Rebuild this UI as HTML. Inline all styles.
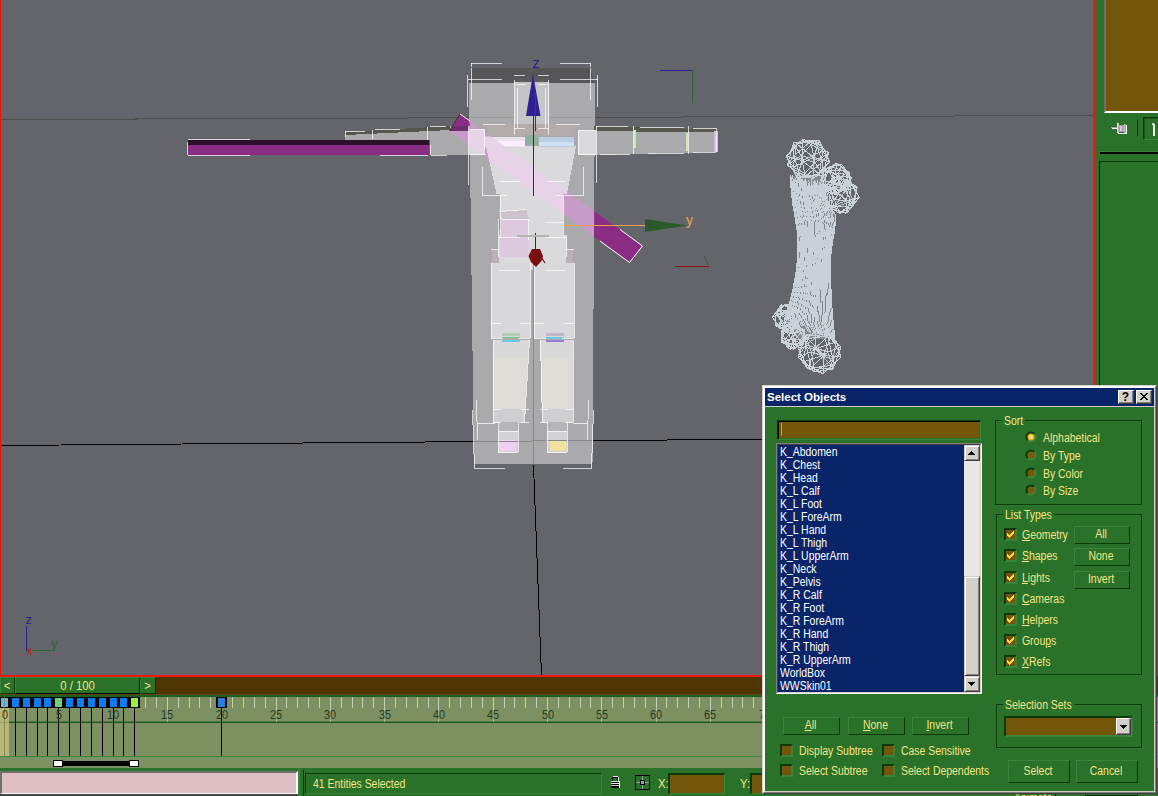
<!DOCTYPE html>
<html><head><meta charset="utf-8"><title>Select Objects</title>
<style>
*{box-sizing:border-box}
html,body{margin:0;padding:0}
body{width:1158px;height:796px;overflow:hidden;background:#2a712a;position:relative;font-family:"Liberation Sans",sans-serif;font-size:12px;color:#f4e586}
.a{position:absolute}
.t{position:absolute;white-space:nowrap;line-height:14px;height:14px;transform:scaleX(.87);transform-origin:0 0}
.tc{position:absolute;white-space:nowrap;line-height:14px;height:14px;text-align:center;transform:scaleX(.87);transform-origin:50% 0}
.btn{position:absolute;border:1px solid;border-color:#37843a #0b3a0b #0b3a0b #37843a;background:#2a712a}
.cb{position:absolute;width:13px;height:13px;background:#72560a;border:2px solid;border-color:#0b3a0b #37843a #37843a #0b3a0b}
.grp{position:absolute;border:1px solid #0b3a0b;box-shadow:1px 1px 0 #30782f, inset 1px 1px 0 #30782f}
.gl{position:absolute;background:#2a712a;padding:0 2px;white-space:nowrap;line-height:14px}
.gl span{display:inline-block;transform:scaleX(.87);transform-origin:0 0}
u{text-decoration:underline;text-underline-offset:1px}
.li i{font-style:normal;position:relative;top:-1px}
.li{position:absolute;left:5px;color:#fff;white-space:nowrap;line-height:13px;height:13px;transform:scaleX(.87);transform-origin:0 0}
.num{position:absolute;top:708px;width:30px;text-align:center;font-size:12.5px;line-height:14px;color:#273d25;transform:scaleX(.87);transform-origin:50% 0}
</style></head>
<body>
<svg class="a" style="left:0;top:0" width="1095" height="677" viewBox="0 0 1095 677" shape-rendering="crispEdges">
<rect x="0" y="0" width="1095" height="677" fill="#64656a" />
<line x1="0" y1="119.5" x2="1094" y2="115.5" stroke="#4d4d4a" stroke-width="1" />
<line x1="0" y1="445.5" x2="1094" y2="436.5" stroke="#000" stroke-width="1" />
<line x1="533.5" y1="465" x2="541.5" y2="676" stroke="#000" stroke-width="1" />
<defs>
<clipPath id="cpA"><polygon points="469,83 595,83 592.5,464 474,464" fill="#000" /><polygon points="345,132 450,126 470,126 470,155 430,155 430,140 345,140" fill="#000" /><polygon points="594,126 717,129.5 717,152 594,155" fill="#000" /></clipPath>
<clipPath id="cpB"><polygon points="486,146 576,146 567,194 563,194 563,235 566.5,235 566.5,270 498.5,270 498.5,235 500,235 500,194 496.5,194" fill="#000" /><polygon points="469,129 485,129 485,155 469,155" fill="#000" /><polygon points="577.5,130 596,130 596,155 577.5,155" fill="#000" /><polygon points="485,136.5 576,136.5 576,146.5 485,146.5" fill="#000" /></clipPath>
</defs>
<rect x="188" y="140" width="241" height="5" fill="#2a1029" />
<rect x="188" y="145" width="241" height="10" fill="#8b2d84" />
<polygon points="460,114 642.5,246 629.5,262.5 449.5,131" fill="#8b2d84" shape-rendering="auto"/>
<polygon points="469,83 595,83 592.5,464 474,464" fill="#aaa9ac" />
<polygon points="472,68 590,68 595,83 469,83" fill="#565658" />
<polygon points="345,132 450,126 470,126 470,155 430,155 430,140 345,140" fill="#aaa9ac" />
<polygon points="345,132 450,126 450,130 345,135" fill="#56564f" />
<polygon points="594,126 717,129.5 717,152 594,155" fill="#aaa9ac" />
<polygon points="594,126 717,129.5 717,132.5 594,131" fill="#57574f" />
<rect x="713.5" y="131" width="4" height="21" fill="#d8baf0" />
<line x1="469" y1="118" x2="595" y2="117" stroke="#9c9b9e" stroke-width="1" />
<polygon points="460,114 642.5,246 629.5,262.5 449.5,131" fill="#c79bc8" clip-path="url(#cpA)" shape-rendering="auto"/>
<polygon points="452,126 469,126 469,131 449.5,131" fill="#6c3070" shape-rendering="auto"/>
<polygon points="449.5,131 469,131 469,145.3" fill="#c79bc8" shape-rendering="auto"/>
<rect x="514" y="78" width="35" height="57" fill="#c5c4c7" />
<rect x="514" y="78" width="35" height="4" fill="#5a5a5a" />
<rect x="488" y="124" width="87" height="12" fill="#b3abac" />
<polygon points="486,146 576,146 567,194 563,194 563,235 566.5,235 566.5,270 498.5,270 498.5,235 500,235 500,194 496.5,194" fill="#dad9dc" />
<polygon points="469,129 485,129 485,155 469,155" fill="#dad9dc" />
<polygon points="577.5,130 596,130 596,155 577.5,155" fill="#dad9dc" />
<rect x="485" y="136.5" width="40" height="10" fill="#ebe0ec" />
<rect x="525" y="135" width="13" height="10" fill="#8fb09a" />
<rect x="539" y="136.5" width="35" height="10" fill="#b9cde5" />
<rect x="485" y="141" width="40" height="5" fill="#fbeefc" />
<rect x="539" y="142" width="35" height="4" fill="#d0e0f4" />
<polygon points="460,114 642.5,246 629.5,262.5 449.5,131" fill="#e8d2e8" clip-path="url(#cpB)" shape-rendering="auto"/>
<rect x="499.5" y="219" width="29" height="38" fill="#ddc9de" />
<polygon points="499.5,211 526,209 529,219 502,219" fill="#cbc3cc" />
<rect x="498" y="219" width="3" height="10" fill="#9a909a" />
<rect x="491" y="263" width="39" height="75" fill="#d8d7da" />
<rect x="534" y="263" width="40" height="75" fill="#d8d7da" />
<polygon points="493,340 529,340 524,423 493,423" fill="#dad9da" />
<polygon points="540,340 573,340 573,423 542,423" fill="#dad9da" />
<polygon points="494,358 527.5,358 525,408 494,408" fill="#dedcd6" />
<polygon points="541,358 572,358 572,408 542.5,408" fill="#dedcd6" />
<rect x="492" y="250" width="7" height="13" fill="#b9b1b6" />
<rect x="566" y="250" width="7" height="13" fill="#b9b1b6" />
<rect x="502" y="333" width="18" height="3" fill="#b8c8b8" />
<rect x="502" y="337" width="18" height="2" fill="#88c090" />
<rect x="502" y="340" width="18" height="2" fill="#70c8e0" />
<rect x="546" y="333" width="18" height="3" fill="#c0b8c8" />
<rect x="546" y="337" width="18" height="2" fill="#70c8e0" />
<rect x="546" y="340" width="18" height="2" fill="#9a78d8" />
<rect x="493" y="409" width="30" height="13" fill="#cfced2" />
<rect x="543" y="409" width="30" height="13" fill="#cfced2" />
<rect x="499" y="422" width="19" height="9" fill="#b5b4b8" />
<rect x="548" y="422" width="19" height="9" fill="#b5b4b8" />
<rect x="498" y="431" width="20" height="22" fill="#d2d1d4" />
<rect x="547" y="431" width="20" height="22" fill="#d2d1d4" />
<rect x="499" y="440" width="17" height="11" fill="#f0d0f0" />
<rect x="550" y="440" width="16" height="11" fill="#f2e0a0" />
<line x1="474" y1="441.5" x2="592" y2="440.5" stroke="#8a898c" stroke-width="1" />
<line x1="533" y1="257" x2="534" y2="464" stroke="#8a898c" stroke-width="1" />
<line x1="471" y1="63.5" x2="502" y2="63.5" stroke="#fff" stroke-width="1" opacity=".72"/>
<line x1="560" y1="63.5" x2="591" y2="63.5" stroke="#fff" stroke-width="1" opacity=".72"/>
<line x1="471.5" y1="63" x2="471.5" y2="67" stroke="#fff" stroke-width="1" opacity=".72"/>
<line x1="590.5" y1="63" x2="590.5" y2="67" stroke="#fff" stroke-width="1" opacity=".72"/>
<line x1="467.5" y1="79.5" x2="502" y2="79.5" stroke="#fff" stroke-width="1" opacity=".72"/>
<line x1="560" y1="79.5" x2="597.5" y2="79.5" stroke="#fff" stroke-width="1" opacity=".72"/>
<line x1="467.5" y1="75" x2="467.5" y2="107" stroke="#fff" stroke-width="1" opacity=".72"/>
<line x1="597.5" y1="75" x2="597.5" y2="107" stroke="#fff" stroke-width="1" opacity=".72"/>
<line x1="471.5" y1="68" x2="471.5" y2="100" stroke="#fff" stroke-width="1" opacity=".72"/>
<line x1="590.5" y1="68" x2="590.5" y2="100" stroke="#fff" stroke-width="1" opacity=".72"/>
<line x1="468.5" y1="126" x2="468.5" y2="185" stroke="#fff" stroke-width="1" opacity=".72"/>
<line x1="596.5" y1="126" x2="596.5" y2="183" stroke="#fff" stroke-width="1" opacity=".72"/>
<line x1="472.5" y1="410" x2="474.5" y2="468" stroke="#fff" stroke-width="1" opacity=".72"/>
<line x1="593.5" y1="410" x2="591.5" y2="468" stroke="#fff" stroke-width="1" opacity=".72"/>
<line x1="474" y1="468.5" x2="505" y2="468.5" stroke="#fff" stroke-width="1" opacity=".72"/>
<line x1="563" y1="468.5" x2="592" y2="468.5" stroke="#fff" stroke-width="1" opacity=".72"/>
<line x1="476.5" y1="400" x2="477.5" y2="440" stroke="#fff" stroke-width="1" opacity=".72"/>
<line x1="588.5" y1="400" x2="587.5" y2="440" stroke="#fff" stroke-width="1" opacity=".72"/>
<line x1="514.5" y1="80" x2="514.5" y2="135" stroke="#fff" stroke-width="1" opacity=".72"/>
<line x1="548.5" y1="80" x2="548.5" y2="135" stroke="#fff" stroke-width="1" opacity=".72"/>
<line x1="514" y1="75.5" x2="525" y2="75.5" stroke="#fff" stroke-width="1" opacity=".72"/>
<line x1="538" y1="75.5" x2="549" y2="75.5" stroke="#fff" stroke-width="1" opacity=".72"/>
<line x1="514" y1="128.5" x2="525" y2="128.5" stroke="#fff" stroke-width="1" opacity=".72"/>
<line x1="538" y1="128.5" x2="549" y2="128.5" stroke="#fff" stroke-width="1" opacity=".72"/>
<line x1="517.5" y1="88" x2="517.5" y2="128" stroke="#fff" stroke-width="1" opacity=".72"/>
<line x1="545.5" y1="88" x2="545.5" y2="128" stroke="#fff" stroke-width="1" opacity=".72"/>
<line x1="516" y1="84.5" x2="526" y2="84.5" stroke="#fff" stroke-width="1" opacity=".72"/>
<line x1="538" y1="84.5" x2="548" y2="84.5" stroke="#fff" stroke-width="1" opacity=".72"/>
<line x1="483" y1="124.5" x2="505" y2="124.5" stroke="#fff" stroke-width="1" opacity=".72"/>
<line x1="556" y1="124.5" x2="580" y2="124.5" stroke="#fff" stroke-width="1" opacity=".72"/>
<line x1="500" y1="181.5" x2="520" y2="181.5" stroke="#fff" stroke-width="1" opacity=".72"/>
<line x1="548" y1="181.5" x2="566" y2="181.5" stroke="#fff" stroke-width="1" opacity=".72"/>
<line x1="482" y1="167" x2="482" y2="195" stroke="#fff" stroke-width="1" opacity=".72"/>
<line x1="482" y1="195.5" x2="507" y2="195.5" stroke="#fff" stroke-width="1" opacity=".72"/>
<line x1="556" y1="195.5" x2="584" y2="195.5" stroke="#fff" stroke-width="1" opacity=".72"/>
<line x1="583.5" y1="167" x2="583.5" y2="195" stroke="#fff" stroke-width="1" opacity=".72"/>
<line x1="500.5" y1="195" x2="500.5" y2="237" stroke="#fff" stroke-width="1" opacity=".72"/>
<line x1="563.5" y1="195" x2="563.5" y2="237" stroke="#fff" stroke-width="1" opacity=".72"/>
<line x1="545" y1="222.5" x2="563" y2="222.5" stroke="#fff" stroke-width="1" opacity=".72"/>
<line x1="499" y1="237.5" x2="520" y2="237.5" stroke="#fff" stroke-width="1" opacity=".72"/>
<line x1="545" y1="237.5" x2="566" y2="237.5" stroke="#fff" stroke-width="1" opacity=".72"/>
<line x1="498.5" y1="219" x2="498.5" y2="257" stroke="#fff" stroke-width="1" opacity=".72"/>
<line x1="566.5" y1="237" x2="566.5" y2="257" stroke="#fff" stroke-width="1" opacity=".72"/>
<line x1="499" y1="211.5" x2="526" y2="209.5" stroke="#fff" stroke-width="1" opacity=".72"/>
<line x1="502" y1="219.5" x2="529" y2="219.5" stroke="#fff" stroke-width="1" opacity=".72"/>
<line x1="528.5" y1="219" x2="528.5" y2="240" stroke="#fff" stroke-width="1" opacity=".72"/>
<line x1="345" y1="131.5" x2="365" y2="131.5" stroke="#fff" stroke-width="1" opacity=".72"/>
<line x1="375" y1="129.5" x2="400" y2="129.5" stroke="#fff" stroke-width="1" opacity=".72"/>
<line x1="430" y1="126.5" x2="446" y2="126.5" stroke="#fff" stroke-width="1" opacity=".72"/>
<line x1="345.5" y1="131" x2="345.5" y2="137" stroke="#fff" stroke-width="1" opacity=".72"/>
<line x1="372.5" y1="130" x2="372.5" y2="139" stroke="#fff" stroke-width="1" opacity=".72"/>
<line x1="427.5" y1="127" x2="427.5" y2="140" stroke="#fff" stroke-width="1" opacity=".72"/>
<line x1="431" y1="155.5" x2="447" y2="155.5" stroke="#fff" stroke-width="1" opacity=".72"/>
<line x1="430.5" y1="145" x2="430.5" y2="155" stroke="#fff" stroke-width="1" opacity=".72"/>
<line x1="188" y1="139.5" x2="250" y2="139.5" stroke="#fff" stroke-width="1" opacity=".72"/>
<line x1="188" y1="155.5" x2="250" y2="155.5" stroke="#fff" stroke-width="1" opacity=".72"/>
<line x1="187.5" y1="142" x2="187.5" y2="155" stroke="#fff" stroke-width="1" opacity=".72"/>
<line x1="380" y1="155.5" x2="428" y2="155.5" stroke="#fff" stroke-width="1" opacity=".72"/>
<line x1="470" y1="129.5" x2="484" y2="129.5" stroke="#fff" stroke-width="1" opacity=".72"/>
<line x1="470" y1="154.5" x2="486" y2="154.5" stroke="#fff" stroke-width="1" opacity=".72"/>
<line x1="484.5" y1="130" x2="484.5" y2="150" stroke="#fff" stroke-width="1" opacity=".72"/>
<line x1="633.5" y1="126" x2="633.5" y2="154" stroke="#fff" stroke-width="1" opacity=".72"/>
<line x1="688.5" y1="126" x2="688.5" y2="154" stroke="#fff" stroke-width="1" opacity=".72"/>
<line x1="596" y1="126.5" x2="628" y2="126.5" stroke="#fff" stroke-width="1" opacity=".72"/>
<line x1="640" y1="127.5" x2="684" y2="127.5" stroke="#fff" stroke-width="1" opacity=".72"/>
<line x1="693" y1="128.5" x2="716" y2="128.5" stroke="#fff" stroke-width="1" opacity=".72"/>
<line x1="716.5" y1="128" x2="716.5" y2="152" stroke="#fff" stroke-width="1" opacity=".72"/>
<line x1="600" y1="154.5" x2="630" y2="154.5" stroke="#fff" stroke-width="1" opacity=".72"/>
<line x1="648" y1="153.5" x2="684" y2="153.5" stroke="#fff" stroke-width="1" opacity=".72"/>
<line x1="693" y1="152.5" x2="716" y2="152.5" stroke="#fff" stroke-width="1" opacity=".72"/>
<line x1="578.5" y1="131" x2="578.5" y2="154" stroke="#fff" stroke-width="1" opacity=".72"/>
<line x1="578" y1="130.5" x2="596" y2="130.5" stroke="#fff" stroke-width="1" opacity=".72"/>
<line x1="578" y1="154.5" x2="596" y2="154.5" stroke="#fff" stroke-width="1" opacity=".72"/>
<rect x="634" y="130" width="2" height="18" fill="#c8e8b8" />
<rect x="686" y="133" width="2" height="18" fill="#c8e8b8" />
<line x1="491.5" y1="263" x2="491.5" y2="338" stroke="#fff" stroke-width="1" opacity=".72"/>
<line x1="530.5" y1="263" x2="530.5" y2="338" stroke="#fff" stroke-width="1" opacity=".72"/>
<line x1="491" y1="323.5" x2="501" y2="323.5" stroke="#fff" stroke-width="1" opacity=".72"/>
<line x1="520" y1="323.5" x2="530" y2="323.5" stroke="#fff" stroke-width="1" opacity=".72"/>
<line x1="491" y1="338.5" x2="503" y2="338.5" stroke="#fff" stroke-width="1" opacity=".72"/>
<line x1="518" y1="338.5" x2="530" y2="338.5" stroke="#fff" stroke-width="1" opacity=".72"/>
<line x1="534.5" y1="263" x2="534.5" y2="338" stroke="#fff" stroke-width="1" opacity=".72"/>
<line x1="574.5" y1="263" x2="574.5" y2="338" stroke="#fff" stroke-width="1" opacity=".72"/>
<line x1="534" y1="323.5" x2="544" y2="323.5" stroke="#fff" stroke-width="1" opacity=".72"/>
<line x1="564" y1="323.5" x2="574" y2="323.5" stroke="#fff" stroke-width="1" opacity=".72"/>
<line x1="534" y1="338.5" x2="546" y2="338.5" stroke="#fff" stroke-width="1" opacity=".72"/>
<line x1="562" y1="338.5" x2="574" y2="338.5" stroke="#fff" stroke-width="1" opacity=".72"/>
<line x1="491" y1="249.5" x2="499" y2="249.5" stroke="#fff" stroke-width="1" opacity=".72"/>
<line x1="566" y1="249.5" x2="574" y2="249.5" stroke="#fff" stroke-width="1" opacity=".72"/>
<line x1="499" y1="270.5" x2="520" y2="270.5" stroke="#fff" stroke-width="1" opacity=".72"/>
<line x1="545" y1="270.5" x2="566" y2="270.5" stroke="#fff" stroke-width="1" opacity=".72"/>
<line x1="529.5" y1="340" x2="524.5" y2="422" stroke="#fff" stroke-width="1" opacity=".72"/>
<line x1="540.5" y1="340" x2="542.5" y2="422" stroke="#fff" stroke-width="1" opacity=".72"/>
<line x1="493.5" y1="340" x2="493.5" y2="422" stroke="#fff" stroke-width="1" opacity=".72"/>
<line x1="493" y1="409.5" x2="501" y2="409.5" stroke="#fff" stroke-width="1" opacity=".72"/>
<line x1="521" y1="409.5" x2="529" y2="409.5" stroke="#fff" stroke-width="1" opacity=".72"/>
<line x1="493" y1="422.5" x2="501" y2="422.5" stroke="#fff" stroke-width="1" opacity=".72"/>
<line x1="521" y1="422.5" x2="529" y2="422.5" stroke="#fff" stroke-width="1" opacity=".72"/>
<line x1="573.5" y1="340" x2="573.5" y2="422" stroke="#fff" stroke-width="1" opacity=".72"/>
<line x1="540" y1="409.5" x2="548" y2="409.5" stroke="#fff" stroke-width="1" opacity=".72"/>
<line x1="565" y1="409.5" x2="573" y2="409.5" stroke="#fff" stroke-width="1" opacity=".72"/>
<line x1="540" y1="422.5" x2="548" y2="422.5" stroke="#fff" stroke-width="1" opacity=".72"/>
<line x1="565" y1="422.5" x2="573" y2="422.5" stroke="#fff" stroke-width="1" opacity=".72"/>
<line x1="498.5" y1="423" x2="498.5" y2="452" stroke="#fff" stroke-width="1" opacity=".72"/>
<line x1="518.5" y1="423" x2="518.5" y2="452" stroke="#fff" stroke-width="1" opacity=".72"/>
<line x1="498" y1="431.5" x2="518" y2="431.5" stroke="#fff" stroke-width="1" opacity=".72"/>
<line x1="498" y1="452.5" x2="518" y2="452.5" stroke="#fff" stroke-width="1" opacity=".72"/>
<line x1="547.5" y1="423" x2="547.5" y2="452" stroke="#fff" stroke-width="1" opacity=".72"/>
<line x1="567.5" y1="423" x2="567.5" y2="452" stroke="#fff" stroke-width="1" opacity=".72"/>
<line x1="547" y1="431.5" x2="567" y2="431.5" stroke="#fff" stroke-width="1" opacity=".72"/>
<line x1="547" y1="452.5" x2="567" y2="452.5" stroke="#fff" stroke-width="1" opacity=".72"/>
<line x1="478" y1="423.5" x2="495" y2="423.5" stroke="#fff" stroke-width="1" opacity=".72"/>
<line x1="573" y1="423.5" x2="588" y2="423.5" stroke="#fff" stroke-width="1" opacity=".72"/>
<g shape-rendering="auto">
<line x1="629.5" y1="262.5" x2="642.5" y2="246" stroke="#fff" stroke-width="1" />
<line x1="600" y1="241" x2="629.5" y2="262.5" stroke="#fff" stroke-width="1" />
<line x1="620" y1="229.5" x2="642.5" y2="246" stroke="#fff" stroke-width="1" />
<line x1="449.5" y1="131" x2="460" y2="114" stroke="#3a3a38" stroke-width="1" />
<line x1="460" y1="114" x2="470" y2="121" stroke="#fff" stroke-width="1" />
</g>
<polygon points="533,74 526,116 540.5,116" fill="#2e2090" shape-rendering="auto"/>
<line x1="533.5" y1="116" x2="533.5" y2="196" stroke="#2e2090" stroke-width="1" />
<line x1="535.5" y1="93" x2="535.5" y2="131" stroke="#9c1a1a" stroke-width="1" />
<line x1="535" y1="233" x2="535" y2="250" stroke="#7a1010" stroke-width="1" />
<polygon points="528.5,256 532,249 540,249 543,256 541.5,261 536,267 531,262" fill="#7a1010" shape-rendering="auto"/>
<line x1="541" y1="257" x2="545" y2="263" stroke="#7a1010" stroke-width="1.3" shape-rendering="auto"/>
<rect x="516.5" y="235" width="32" height="2" fill="#b4b3ae" />
<line x1="564" y1="225.5" x2="646" y2="225.5" stroke="#f0a050" stroke-width="1" />
<polygon points="645,219 645,232 687,225.5" fill="#2a5a2a" shape-rendering="auto"/>
<line x1="660" y1="70.5" x2="693" y2="70.5" stroke="#2e2090" stroke-width="1" />
<line x1="692.5" y1="70" x2="692.5" y2="103" stroke="#2a6a3a" stroke-width="1" />
<line x1="675" y1="266.5" x2="709" y2="266.5" stroke="#8a1818" stroke-width="1" />
<line x1="704" y1="256" x2="708" y2="265" stroke="#2a6a2a" stroke-width="1" shape-rendering="auto"/>
<line x1="26.5" y1="626" x2="26.5" y2="651" stroke="#2e2090" stroke-width="1" />
<line x1="27" y1="650.5" x2="55" y2="650.5" stroke="#2a6a3a" stroke-width="1" />
<g shape-rendering="auto" font-family="Liberation Sans, sans-serif" font-size="13">
<text x="532.5" y="68" fill="#2e2090" font-size="14">z</text>
<text x="686" y="224.5" fill="#f0a050" font-size="14">y</text>
<text x="25.5" y="624" fill="#2e2090" font-size="13">z</text>
<text x="51" y="648" fill="#2a6a3a" font-size="13">y</text>
<text x="26.5" y="655" fill="#c02020" font-size="12">x</text>
</g>
<g shape-rendering="crispEdges" stroke="#c9d0d8" stroke-width="1" fill="none">
<path d="M790 176 L792 200 L797 228 L798 255 L795 280 L790 302 L783 322 L800 340 L835 338 L832 310 L831 290 L830 262 L832 245 L835 228 L836 216 L827 200 L826 176Z" fill="#c9d0d8" stroke="none" opacity=".32"/>
<path d="M796.7 177.5L819.3 174.1M796.7 177.5L802.3 160.6M796.7 177.5L813.7 178.1M796.7 177.5L793.2 167.1M796.7 177.5L786.2 156.3M819.3 174.1L802.3 160.6M819.3 174.1L813.7 178.1M819.3 174.1L829.8 161.7M819.3 174.1L822.8 150.9M796.7 143.9L819.3 140.5M796.7 143.9L802.3 139.9M796.7 143.9L813.7 157.4M796.7 143.9L793.2 167.1M796.7 143.9L786.2 156.3M819.3 140.5L802.3 139.9M819.3 140.5L813.7 157.4M819.3 140.5L829.8 161.7M819.3 140.5L822.8 150.9M802.3 139.9L802.3 160.6M802.3 139.9L822.8 150.9M802.3 139.9L786.2 156.3M802.3 160.6L822.8 150.9M802.3 160.6L786.2 156.3M813.7 157.4L813.7 178.1M813.7 157.4L829.8 161.7M813.7 157.4L793.2 167.1M813.7 178.1L829.8 161.7M813.7 178.1L793.2 167.1M829.8 161.7L822.8 150.9M793.2 167.1L786.2 156.3M800.9 177.1L815.1 162.5M800.9 177.1L793.5 156.3M800.9 177.1L822.5 175.1M800.9 177.1L805.4 176.6M800.9 177.1L787.5 165.0M815.1 162.5L793.5 156.3M815.1 162.5L822.5 175.1M815.1 162.5L828.5 153.0M815.1 162.5L810.6 141.4M800.9 155.5L815.1 140.9M800.9 155.5L793.5 142.9M800.9 155.5L822.5 161.7M800.9 155.5L805.4 176.6M800.9 155.5L787.5 165.0M815.1 140.9L793.5 142.9M815.1 140.9L822.5 161.7M815.1 140.9L828.5 153.0M815.1 140.9L810.6 141.4M793.5 142.9L793.5 156.3M793.5 142.9L810.6 141.4M793.5 142.9L787.5 165.0M793.5 156.3L810.6 141.4M793.5 156.3L787.5 165.0M822.5 161.7L822.5 175.1M822.5 161.7L828.5 153.0M822.5 161.7L805.4 176.6M822.5 175.1L828.5 153.0M822.5 175.1L805.4 176.6M828.5 153.0L810.6 141.4M805.4 176.6L787.5 165.0M830.6 194.1L841.4 191.4M830.6 194.1L825.0 185.8M830.6 194.1L847.0 189.2M830.6 194.1L834.1 182.3M830.6 194.1L820.5 180.1M841.4 191.4L825.0 185.8M841.4 191.4L847.0 189.2M841.4 191.4L851.5 177.9M841.4 191.4L837.9 175.7M830.6 166.6L841.4 163.9M830.6 166.6L825.0 168.8M830.6 166.6L847.0 172.2M830.6 166.6L834.1 182.3M830.6 166.6L820.5 180.1M841.4 163.9L825.0 168.8M841.4 163.9L847.0 172.2M841.4 163.9L851.5 177.9M841.4 163.9L837.9 175.7M825.0 168.8L825.0 185.8M825.0 168.8L837.9 175.7M825.0 168.8L820.5 180.1M825.0 185.8L837.9 175.7M825.0 185.8L820.5 180.1M847.0 172.2L847.0 189.2M847.0 172.2L851.5 177.9M847.0 172.2L834.1 182.3M847.0 189.2L851.5 177.9M847.0 189.2L834.1 182.3M851.5 177.9L837.9 175.7M834.1 182.3L820.5 180.1M835.4 194.9L836.6 184.8M835.4 194.9L822.4 185.1M835.4 194.9L849.6 186.3M835.4 194.9L843.4 187.6M835.4 194.9L826.6 186.9M836.6 184.8L822.4 185.1M836.6 184.8L849.6 186.3M836.6 184.8L845.4 171.1M836.6 184.8L828.6 170.4M835.4 173.2L836.6 163.1M835.4 173.2L822.4 171.7M835.4 173.2L849.6 172.9M835.4 173.2L843.4 187.6M835.4 173.2L826.6 186.9M836.6 163.1L822.4 171.7M836.6 163.1L849.6 172.9M836.6 163.1L845.4 171.1M836.6 163.1L828.6 170.4M822.4 171.7L822.4 185.1M822.4 171.7L828.6 170.4M822.4 171.7L826.6 186.9M822.4 185.1L828.6 170.4M822.4 185.1L826.6 186.9M849.6 172.9L849.6 186.3M849.6 172.9L845.4 171.1M849.6 172.9L843.4 187.6M849.6 186.3L845.4 171.1M849.6 186.3L843.4 187.6M845.4 171.1L828.6 170.4M843.4 187.6L826.6 186.9M830.6 208.4L849.4 202.2M830.6 208.4L833.5 189.4M830.6 208.4L846.5 213.3M830.6 208.4L828.7 207.5M830.6 208.4L820.7 192.7M849.4 202.2L833.5 189.4M849.4 202.2L846.5 213.3M849.4 202.2L859.3 197.3M849.4 202.2L851.3 182.5M830.6 187.8L849.4 181.6M830.6 187.8L833.5 176.7M830.6 187.8L846.5 200.6M830.6 187.8L828.7 207.5M830.6 187.8L820.7 192.7M849.4 181.6L833.5 176.7M849.4 181.6L846.5 200.6M849.4 181.6L859.3 197.3M849.4 181.6L851.3 182.5M833.5 176.7L833.5 189.4M833.5 176.7L851.3 182.5M833.5 176.7L820.7 192.7M833.5 189.4L851.3 182.5M833.5 189.4L820.7 192.7M846.5 200.6L846.5 213.3M846.5 200.6L859.3 197.3M846.5 200.6L828.7 207.5M846.5 213.3L859.3 197.3M846.5 213.3L828.7 207.5M859.3 197.3L851.3 182.5M828.7 207.5L820.7 192.7M834.6 206.7L845.4 190.4M834.6 206.7L826.5 188.7M834.6 206.7L853.5 205.7M834.6 206.7L839.7 213.5M834.6 206.7L822.9 203.0M845.4 190.4L826.5 188.7M845.4 190.4L853.5 205.7M845.4 190.4L857.1 187.0M845.4 190.4L840.3 176.5M834.6 199.6L845.4 183.3M834.6 199.6L826.5 184.3M834.6 199.6L853.5 201.3M834.6 199.6L839.7 213.5M834.6 199.6L822.9 203.0M845.4 183.3L826.5 184.3M845.4 183.3L853.5 201.3M845.4 183.3L857.1 187.0M845.4 183.3L840.3 176.5M826.5 184.3L826.5 188.7M826.5 184.3L840.3 176.5M826.5 184.3L822.9 203.0M826.5 188.7L840.3 176.5M826.5 188.7L822.9 203.0M853.5 201.3L853.5 205.7M853.5 201.3L857.1 187.0M853.5 201.3L839.7 213.5M853.5 205.7L857.1 187.0M853.5 205.7L839.7 213.5M857.1 187.0L840.3 176.5M839.7 213.5L822.9 203.0M780.3 327.7L793.7 321.6M780.3 327.7L781.1 313.0M780.3 327.7L792.9 331.2M780.3 327.7L779.8 328.6M780.3 327.7L772.5 317.3M793.7 321.6L781.1 313.0M793.7 321.6L792.9 331.2M793.7 321.6L801.5 318.7M793.7 321.6L794.2 307.4M780.3 314.4L793.7 308.3M780.3 314.4L781.1 304.8M780.3 314.4L792.9 323.0M780.3 314.4L779.8 328.6M780.3 314.4L772.5 317.3M793.7 308.3L781.1 304.8M793.7 308.3L792.9 323.0M793.7 308.3L801.5 318.7M793.7 308.3L794.2 307.4M781.1 304.8L781.1 313.0M781.1 304.8L794.2 307.4M781.1 304.8L772.5 317.3M781.1 313.0L794.2 307.4M781.1 313.0L772.5 317.3M792.9 323.0L792.9 331.2M792.9 323.0L801.5 318.7M792.9 323.0L779.8 328.6M792.9 331.2L801.5 318.7M792.9 331.2L779.8 328.6M801.5 318.7L794.2 307.4M779.8 328.6L772.5 317.3M783.6 326.0L790.4 312.9M783.6 326.0L776.3 313.5M783.6 326.0L797.7 324.3M783.6 326.0L788.2 331.9M783.6 326.0L775.0 325.3M790.4 312.9L776.3 313.5M790.4 312.9L797.7 324.3M790.4 312.9L799.0 310.7M790.4 312.9L785.8 304.1M783.6 323.1L790.4 310.0M783.6 323.1L776.3 311.7M783.6 323.1L797.7 322.5M783.6 323.1L788.2 331.9M783.6 323.1L775.0 325.3M790.4 310.0L776.3 311.7M790.4 310.0L797.7 322.5M790.4 310.0L799.0 310.7M790.4 310.0L785.8 304.1M776.3 311.7L776.3 313.5M776.3 311.7L785.8 304.1M776.3 311.7L775.0 325.3M776.3 313.5L785.8 304.1M776.3 313.5L775.0 325.3M797.7 322.5L797.7 324.3M797.7 322.5L799.0 310.7M797.7 322.5L788.2 331.9M797.7 324.3L799.0 310.7M797.7 324.3L788.2 331.9M799.0 310.7L785.8 304.1M788.2 331.9L775.0 325.3M789.7 349.3L796.3 345.4M789.7 349.3L782.4 341.4M789.7 349.3L803.6 344.6M789.7 349.3L794.2 340.1M789.7 349.3L781.0 338.1M796.3 345.4L782.4 341.4M796.3 345.4L803.6 344.6M796.3 345.4L805.0 333.9M796.3 345.4L791.8 331.9M789.7 326.6L796.3 322.7M789.7 326.6L782.4 327.4M789.7 326.6L803.6 330.6M789.7 326.6L794.2 340.1M789.7 326.6L781.0 338.1M796.3 322.7L782.4 327.4M796.3 322.7L803.6 330.6M796.3 322.7L805.0 333.9M796.3 322.7L791.8 331.9M782.4 327.4L782.4 341.4M782.4 327.4L791.8 331.9M782.4 327.4L781.0 338.1M782.4 341.4L791.8 331.9M782.4 341.4L781.0 338.1M803.6 330.6L803.6 344.6M803.6 330.6L805.0 333.9M803.6 330.6L794.2 340.1M803.6 344.6L805.0 333.9M803.6 344.6L794.2 340.1M805.0 333.9L791.8 331.9M794.2 340.1L781.0 338.1M793.9 349.3L792.1 339.6M793.9 349.3L781.5 342.2M793.9 349.3L804.5 340.2M793.9 349.3L801.6 343.2M793.9 349.3L787.4 344.4M792.1 339.6L781.5 342.2M792.1 339.6L804.5 340.2M792.1 339.6L798.6 327.6M792.1 339.6L784.4 328.8M793.9 332.4L792.1 322.7M793.9 332.4L781.5 331.8M793.9 332.4L804.5 329.8M793.9 332.4L801.6 343.2M793.9 332.4L787.4 344.4M792.1 322.7L781.5 331.8M792.1 322.7L804.5 329.8M792.1 322.7L798.6 327.6M792.1 322.7L784.4 328.8M781.5 331.8L781.5 342.2M781.5 331.8L784.4 328.8M781.5 331.8L787.4 344.4M781.5 342.2L784.4 328.8M781.5 342.2L787.4 344.4M804.5 329.8L804.5 340.2M804.5 329.8L798.6 327.6M804.5 329.8L801.6 343.2M804.5 340.2L798.6 327.6M804.5 340.2L801.6 343.2M798.6 327.6L784.4 328.8M801.6 343.2L787.4 344.4M807.6 368.5L831.4 365.4M807.6 368.5L815.6 348.9M807.6 368.5L823.4 373.6M807.6 368.5L802.7 362.1M807.6 368.5L797.9 346.9M831.4 365.4L815.6 348.9M831.4 365.4L823.4 373.6M831.4 365.4L841.1 357.1M831.4 365.4L836.3 341.9M807.6 338.6L831.4 335.5M807.6 338.6L815.6 330.4M807.6 338.6L823.4 355.1M807.6 338.6L802.7 362.1M807.6 338.6L797.9 346.9M831.4 335.5L815.6 330.4M831.4 335.5L823.4 355.1M831.4 335.5L841.1 357.1M831.4 335.5L836.3 341.9M815.6 330.4L815.6 348.9M815.6 330.4L836.3 341.9M815.6 330.4L797.9 346.9M815.6 348.9L836.3 341.9M815.6 348.9L797.9 346.9M823.4 355.1L823.4 373.6M823.4 355.1L841.1 357.1M823.4 355.1L802.7 362.1M823.4 373.6L841.1 357.1M823.4 373.6L802.7 362.1M841.1 357.1L836.3 341.9M802.7 362.1L797.9 346.9M811.3 367.4L827.7 352.1M811.3 367.4L805.9 344.7M811.3 367.4L833.1 368.9M811.3 367.4L814.7 371.9M811.3 367.4L797.9 357.0M827.7 352.1L805.9 344.7M827.7 352.1L833.1 368.9M827.7 352.1L841.1 347.0M827.7 352.1L824.3 332.1M811.3 351.9L827.7 336.6M811.3 351.9L805.9 335.1M811.3 351.9L833.1 359.3M811.3 351.9L814.7 371.9M811.3 351.9L797.9 357.0M827.7 336.6L805.9 335.1M827.7 336.6L833.1 359.3M827.7 336.6L841.1 347.0M827.7 336.6L824.3 332.1M805.9 335.1L805.9 344.7M805.9 335.1L824.3 332.1M805.9 335.1L797.9 357.0M805.9 344.7L824.3 332.1M805.9 344.7L797.9 357.0M833.1 359.3L833.1 368.9M833.1 359.3L841.1 347.0M833.1 359.3L814.7 371.9M833.1 368.9L841.1 347.0M833.1 368.9L814.7 371.9M841.1 347.0L824.3 332.1M814.7 371.9L797.9 357.0M790.0 174.9L791.1 188.9L792.5 202.9L795.0 216.9L797.1 230.9L797.6 244.9L797.5 258.9L795.9 272.9L793.4 286.9L790.2 300.9L785.5 314.9L784.1 323.2M790.8 177.4L792.0 191.4L793.7 205.4L796.2 219.4L797.9 233.4L798.4 247.4L797.9 261.4L796.2 275.4L793.6 289.4L790.3 303.4L785.5 317.4L784.2 321.3M791.7 177.4L792.9 191.4L794.6 205.4L797.3 219.4L798.8 233.4L799.2 247.4L798.7 261.4L797.1 275.4L794.6 289.4L791.4 303.4L786.8 317.4L786.2 319.1M792.7 175.0L793.8 189.0L795.3 203.0L798.1 217.0L799.9 231.0L800.2 245.0L800.0 259.0L798.5 273.0L796.2 287.0L793.4 301.0L789.0 315.0L787.4 320.1M793.9 179.8L795.1 193.8L797.2 207.8L799.9 221.8L801.0 235.8L801.2 249.8L800.3 263.8L798.8 277.8L796.3 291.8L793.1 305.8L788.8 319.8L788.5 320.8M794.7 178.8L795.8 192.8L797.9 206.8L800.7 220.8L801.8 234.8L802.0 248.8L801.2 262.8L799.7 276.8L797.3 290.8L794.3 304.8L790.2 318.8L794.1 327.8M795.7 177.6L796.8 191.6L798.8 205.6L801.7 219.6L802.9 233.6L803.0 247.6L802.3 261.6L800.9 275.6L798.7 289.6L796.0 303.6L792.0 317.6L796.2 328.6M796.6 180.5L797.6 194.5L800.1 208.5L802.8 222.5L803.6 236.5L803.6 250.5L802.6 264.5L801.3 278.5L798.9 292.5L795.9 306.5L792.1 320.5L792.8 323.4M797.2 176.3L798.3 190.3L800.1 204.3L803.4 218.3L804.6 232.3L804.5 246.3L803.9 260.3L802.6 274.3L800.7 288.3L798.2 302.3L794.5 316.3L794.6 324.1M798.6 177.0L799.6 191.0L801.6 205.0L804.9 219.0L805.9 233.0L805.7 247.0L805.0 261.0L803.8 275.0L801.9 289.0L799.6 303.0L796.1 317.0L798.5 326.9M799.5 178.3L800.5 192.3L802.8 206.3L806.0 220.3L806.7 234.3L806.5 248.3L805.6 262.3L804.5 276.3L802.6 290.3L800.2 304.3L796.9 318.3L799.7 327.0M800.0 176.6L801.0 190.6L802.9 204.6L806.5 218.6L807.4 232.6L807.1 246.6L806.4 260.6L805.2 274.6L803.5 288.6L801.3 302.6L798.1 316.6L798.7 324.6M801.4 179.0L802.4 193.0L805.0 207.0L808.1 221.0L808.6 235.0L808.3 249.0L807.3 263.0L806.3 277.0L804.5 291.0L802.2 305.0L799.2 319.0L801.4 326.1M802.3 179.4L803.3 193.4L806.0 207.4L809.1 221.4L809.5 235.4L809.1 249.4L808.1 263.4L807.1 277.4L805.3 291.4L803.2 305.4L800.3 319.4L802.8 326.4M803.4 181.1L804.4 195.1L807.6 209.1L810.4 223.1L810.4 237.1L810.0 251.1L808.9 265.1L808.0 279.1L806.2 293.1L804.1 307.1L801.4 321.1L804.2 326.5M804.2 180.2L805.1 194.2L808.2 208.2L811.2 222.2L811.3 236.2L810.8 250.2L809.7 264.2L808.9 278.2L807.2 292.2L805.2 306.2L802.7 320.2L808.6 331.9M805.1 179.0L806.0 193.0L808.9 207.0L812.2 221.0L812.4 235.0L811.7 249.0L810.7 263.0L809.9 277.0L808.4 291.0L806.7 305.0L804.3 319.0L810.4 333.0L810.6 333.3M805.7 179.9L806.7 193.9L809.8 207.9L812.9 221.9L812.9 235.9L812.3 249.9L811.2 263.9L810.4 277.9L809.0 291.9L807.2 305.9L804.9 319.9L810.3 331.8M806.7 180.6L807.6 194.6L811.0 208.6L814.0 222.6L813.8 236.6L813.1 250.6L812.0 264.6L811.3 278.6L809.9 292.6L808.2 306.6L806.1 320.6L808.5 326.5M808.0 182.5L808.9 196.5L813.0 210.5L815.4 224.5L814.9 238.5L814.2 252.5L813.0 266.5L812.4 280.5L811.1 294.5L809.4 308.5L807.9 322.5L812.7 331.4M808.9 180.0L809.8 194.0L813.2 208.0L816.5 222.0L816.1 236.0L815.2 250.0L814.1 264.0L813.6 278.0L812.4 292.0L811.0 306.0L809.3 320.0L814.6 332.9M809.8 181.8L810.6 195.8L814.7 209.8L817.4 223.8L816.8 237.8L815.9 251.8L814.8 265.8L814.3 279.8L813.1 293.8L811.7 307.8L810.2 321.8L814.8 331.4M811.0 184.2L811.8 198.2L816.8 212.2L818.6 226.2L817.6 240.2L816.7 254.2L815.7 268.2L815.1 282.2L814.1 296.2L812.7 310.2L812.7 324.2L816.3 332.0M811.5 179.1L812.3 193.1L815.6 207.1L819.3 221.1L818.9 235.1L817.8 249.1L816.6 263.1L816.2 277.1L815.3 291.1L814.3 305.1L813.0 319.1L817.8 333.1L818.3 334.3M812.7 184.9L813.6 198.9L819.0 212.9L820.5 226.9L819.2 240.9L818.3 254.9L817.3 268.9L816.8 282.9L816.0 296.9L814.8 310.9L815.3 324.9L819.9 335.7M813.3 181.4L814.1 195.4L818.3 209.4L821.2 223.4L820.3 237.4L819.2 251.4L818.0 265.4L817.7 279.4L817.0 293.4L816.0 307.4L815.1 321.4L820.3 334.8M814.1 182.0L814.9 196.0L819.4 210.0L822.0 224.0L821.0 238.0L819.8 252.0L818.7 266.0L818.5 280.0L817.8 294.0L816.9 308.0L816.2 322.0L819.8 331.2M814.9 179.8L815.7 193.8L819.5 207.8L823.1 221.8L822.2 235.8L820.9 249.8L819.7 263.8L819.5 277.8L818.9 291.8L818.3 305.8L817.6 319.8L821.9 333.8L822.9 336.5M815.9 181.2L816.7 195.2L821.1 209.2L824.1 223.2L823.0 237.2L821.7 251.2L820.5 265.2L820.4 279.2L819.9 293.2L819.3 307.2L818.8 321.2L823.0 333.9M817.2 180.5L817.9 194.5L822.2 208.5L825.6 222.5L824.4 236.5L823.0 250.5L821.8 264.5L821.7 278.5L821.4 292.5L820.9 306.5L820.7 320.5L824.6 334.5L824.8 335.1M818.2 185.5L818.9 199.5L825.3 213.5L826.3 227.5L824.5 241.5L823.2 255.5L822.4 269.5L822.4 283.5L822.1 297.5L821.7 311.5L822.8 325.5L826.6 338.4M819.1 182.1L819.8 196.1L824.9 210.1L827.5 224.1L826.1 238.1L824.5 252.1L823.5 266.1L823.5 280.1L823.3 294.1L823.1 308.1L823.3 322.1L827.0 335.7M819.9 185.9L820.6 199.9L827.5 213.9L828.1 227.9L826.2 241.9L824.8 255.9L824.1 269.9L824.1 283.9L824.0 297.9L823.9 311.9L825.1 325.9L828.6 339.9L828.6 340.4M820.5 181.8L821.2 195.8L826.3 209.8L829.1 223.8L827.6 237.8L825.9 251.8L824.8 265.8L825.0 279.8L824.9 293.8L824.9 307.8L825.3 321.8L828.4 335.0M821.6 183.9L822.3 197.9L828.4 211.9L830.1 225.9L828.2 239.9L826.6 253.9L825.7 267.9L825.9 281.9L826.0 295.9L826.1 309.9L827.0 323.9L830.1 337.9L830.2 338.3M822.4 181.2L823.1 195.2L828.1 209.2L831.2 223.2L829.6 237.2L827.7 251.2L826.6 265.2L826.8 279.2L827.0 293.2L827.2 307.2L827.9 321.2L830.5 335.2L831.0 337.4M823.6 184.8L824.2 198.8L831.0 212.8L832.1 226.8L830.0 240.8L828.3 254.8L827.6 268.8L827.9 282.8L828.2 296.8L828.5 310.8L829.8 324.8L832.1 338.8L832.2 342.2M824.6 184.7L825.3 198.7L832.2 212.7L833.3 226.7L831.1 240.7L829.3 254.7L828.6 268.7L829.0 282.7L829.4 296.7L829.9 310.7L831.3 324.7L833.2 338.7L833.3 340.1M825.4 182.1L826.0 196.1L831.8 210.1L834.4 224.1L832.4 238.1L830.4 252.1L829.4 266.1L829.8 280.1L830.3 294.1L830.9 308.1L832.2 322.1L833.9 336.1L834.2 342.8M826.5 187.2L827.7 201.2L835.6 215.2L834.8 229.2L832.3 243.2L830.6 257.2L830.3 271.2L830.8 285.2L831.5 299.2L832.3 313.2L833.8 327.2L835.0 341.2L835.0 342.4"/>
</g>
</svg>
<div class="a" style="left:0;top:0;width:1px;height:677px;background:#e01808"></div>
<div class="a" style="left:1093px;top:0;width:2px;height:677px;background:#f01808"></div>
<div class="a" style="left:0;top:675px;width:1095px;height:2px;background:#f01808"></div>
<div class="a" style="left:1104px;top:0;width:54px;height:113px;background:#72560a;border-left:2px solid #707070;border-bottom:2px solid #fff"></div>
<svg class="a" style="left:1111px;top:123px" width="17" height="12" viewBox="0 0 17 12" shape-rendering="crispEdges">
<rect x="0" y="4" width="6" height="1" fill="#a8a2a8"/><rect x="1" y="5" width="6" height="1" fill="#fff"/>
<rect x="7" y="10" width="9" height="1" fill="#fff"/><rect x="15" y="2" width="1" height="9" fill="#fff"/>
<rect x="6" y="0" width="2" height="10" fill="#d4d0d4"/><rect x="6" y="0" width="1" height="3" fill="#fff"/><rect x="7" y="1" width="1" height="8" fill="#b8b2b8"/>
<rect x="8" y="2" width="5" height="7" fill="#a8a0a8"/><rect x="9" y="3" width="2" height="5" fill="#d0ccd0"/>
<rect x="13" y="1" width="2" height="9" fill="#a098a0"/><rect x="13" y="1" width="1" height="8" fill="#c8c4c8"/></svg>
<div class="a" style="left:1137px;top:120px;width:1px;height:16px;background:#0b3a0b"></div>
<div class="a" style="left:1143px;top:117px;width:20px;height:23px;border:1px solid #0b3a0b;border-right:0;border-bottom:1px solid #37843a;box-shadow:inset 1px 1px 0 #1c581c"></div>
<div class="a" style="left:1153px;top:124px;width:2px;height:12px;background:#f0ecf0"></div><div class="a" style="left:1152px;top:123px;width:2px;height:2px;background:#e0dce0"></div>
<div class="a" style="left:1099px;top:151px;width:60px;height:1px;background:#37843a"></div>
<div class="a" style="left:1100px;top:152px;width:60px;height:2px;background:#000"></div>
<div class="a" style="left:1099px;top:161px;width:60px;height:640px;border:1px solid #0b3a0b;border-left-color:#000"></div>
<div class="a" style="left:0;top:677px;width:1158px;height:18px;background:#4f3503"></div>
<div class="btn" style="left:0;top:677px;width:15px;height:17px"></div><div class="tc" style="left:0;top:679px;width:14px;font-size:13px">&lt;</div>
<div class="btn" style="left:15px;top:677px;width:125px;height:17px;border-bottom:1px solid #000;border-right:1px solid #000"></div><div class="tc" style="left:15px;top:679px;width:125px;font-size:13px">0 / 100</div>
<div class="btn" style="left:140px;top:677px;width:16px;height:17px"></div><div class="tc" style="left:140px;top:679px;width:15px;font-size:13px">&gt;</div>
<div class="a" style="left:0;top:694px;width:1158px;height:1px;background:#5e4610"></div>
<div class="a" style="left:0;top:695px;width:1158px;height:73px;background:#7c9062"></div>
<div class="a" style="left:0;top:695px;width:1158px;height:2px;background:#1e5e1e"></div>
<div class="a" style="left:0;top:721px;width:1158px;height:1px;background:#4c8046"></div><div class="a" style="left:0;top:722px;width:1158px;height:1px;background:#1a521a"></div>
<div class="a" style="left:0;top:756px;width:1158px;height:1px;background:#3c8a3c"></div>
<div class="a" style="left:0;top:768px;width:1158px;height:28px;background:#2a712a"></div>
<svg class="a" style="left:0;top:697px" width="1158" height="62" shape-rendering="crispEdges"><rect x="145" y="0" width="1" height="11" fill="#c6cdb8"/><rect x="156" y="0" width="1" height="11" fill="#c6cdb8"/><rect x="167" y="0" width="1" height="13" fill="#c6cdb8"/><rect x="167" y="13" width="1" height="12" fill="#a3b08a"/><rect x="178" y="0" width="1" height="11" fill="#c6cdb8"/><rect x="189" y="0" width="1" height="11" fill="#c6cdb8"/><rect x="199" y="0" width="1" height="11" fill="#c6cdb8"/><rect x="210" y="0" width="1" height="11" fill="#c6cdb8"/><rect x="221" y="0" width="1" height="13" fill="#c6cdb8"/><rect x="221" y="13" width="1" height="12" fill="#a3b08a"/><rect x="232" y="0" width="1" height="11" fill="#c6cdb8"/><rect x="243" y="0" width="1" height="11" fill="#c6cdb8"/><rect x="254" y="0" width="1" height="11" fill="#c6cdb8"/><rect x="265" y="0" width="1" height="11" fill="#c6cdb8"/><rect x="276" y="0" width="1" height="13" fill="#c6cdb8"/><rect x="276" y="13" width="1" height="12" fill="#a3b08a"/><rect x="286" y="0" width="1" height="11" fill="#c6cdb8"/><rect x="297" y="0" width="1" height="11" fill="#c6cdb8"/><rect x="308" y="0" width="1" height="11" fill="#c6cdb8"/><rect x="319" y="0" width="1" height="11" fill="#c6cdb8"/><rect x="330" y="0" width="1" height="13" fill="#c6cdb8"/><rect x="330" y="13" width="1" height="12" fill="#a3b08a"/><rect x="341" y="0" width="1" height="11" fill="#c6cdb8"/><rect x="352" y="0" width="1" height="11" fill="#c6cdb8"/><rect x="362" y="0" width="1" height="11" fill="#c6cdb8"/><rect x="373" y="0" width="1" height="11" fill="#c6cdb8"/><rect x="384" y="0" width="1" height="13" fill="#c6cdb8"/><rect x="384" y="13" width="1" height="12" fill="#a3b08a"/><rect x="395" y="0" width="1" height="11" fill="#c6cdb8"/><rect x="406" y="0" width="1" height="11" fill="#c6cdb8"/><rect x="417" y="0" width="1" height="11" fill="#c6cdb8"/><rect x="428" y="0" width="1" height="11" fill="#c6cdb8"/><rect x="438" y="0" width="1" height="13" fill="#c6cdb8"/><rect x="438" y="13" width="1" height="12" fill="#a3b08a"/><rect x="449" y="0" width="1" height="11" fill="#c6cdb8"/><rect x="460" y="0" width="1" height="11" fill="#c6cdb8"/><rect x="471" y="0" width="1" height="11" fill="#c6cdb8"/><rect x="482" y="0" width="1" height="11" fill="#c6cdb8"/><rect x="493" y="0" width="1" height="13" fill="#c6cdb8"/><rect x="493" y="13" width="1" height="12" fill="#a3b08a"/><rect x="504" y="0" width="1" height="11" fill="#c6cdb8"/><rect x="514" y="0" width="1" height="11" fill="#c6cdb8"/><rect x="525" y="0" width="1" height="11" fill="#c6cdb8"/><rect x="536" y="0" width="1" height="11" fill="#c6cdb8"/><rect x="547" y="0" width="1" height="13" fill="#c6cdb8"/><rect x="547" y="13" width="1" height="12" fill="#a3b08a"/><rect x="558" y="0" width="1" height="11" fill="#c6cdb8"/><rect x="569" y="0" width="1" height="11" fill="#c6cdb8"/><rect x="580" y="0" width="1" height="11" fill="#c6cdb8"/><rect x="590" y="0" width="1" height="11" fill="#c6cdb8"/><rect x="601" y="0" width="1" height="13" fill="#c6cdb8"/><rect x="601" y="13" width="1" height="12" fill="#a3b08a"/><rect x="612" y="0" width="1" height="11" fill="#c6cdb8"/><rect x="623" y="0" width="1" height="11" fill="#c6cdb8"/><rect x="634" y="0" width="1" height="11" fill="#c6cdb8"/><rect x="645" y="0" width="1" height="11" fill="#c6cdb8"/><rect x="656" y="0" width="1" height="13" fill="#c6cdb8"/><rect x="656" y="13" width="1" height="12" fill="#a3b08a"/><rect x="666" y="0" width="1" height="11" fill="#c6cdb8"/><rect x="677" y="0" width="1" height="11" fill="#c6cdb8"/><rect x="688" y="0" width="1" height="11" fill="#c6cdb8"/><rect x="699" y="0" width="1" height="11" fill="#c6cdb8"/><rect x="710" y="0" width="1" height="13" fill="#c6cdb8"/><rect x="710" y="13" width="1" height="12" fill="#a3b08a"/><rect x="721" y="0" width="1" height="11" fill="#c6cdb8"/><rect x="732" y="0" width="1" height="11" fill="#c6cdb8"/><rect x="742" y="0" width="1" height="11" fill="#c6cdb8"/><rect x="753" y="0" width="1" height="11" fill="#c6cdb8"/><rect x="764" y="0" width="1" height="13" fill="#c6cdb8"/><rect x="764" y="13" width="1" height="12" fill="#a3b08a"/><rect x="775" y="0" width="1" height="11" fill="#c6cdb8"/><rect x="0" y="0" width="140" height="11" fill="#000"/><rect x="1" y="1" width="7" height="9" fill="#6ab2e6"/><rect x="4" y="11" width="1" height="48" fill="#000"/><rect x="12" y="1" width="7" height="9" fill="#0e7cf0"/><rect x="15" y="11" width="1" height="48" fill="#000"/><rect x="23" y="1" width="7" height="9" fill="#0e7cf0"/><rect x="26" y="11" width="1" height="48" fill="#000"/><rect x="34" y="1" width="7" height="9" fill="#0e7cf0"/><rect x="37" y="11" width="1" height="48" fill="#000"/><rect x="44" y="1" width="7" height="9" fill="#0e7cf0"/><rect x="47" y="11" width="1" height="48" fill="#000"/><rect x="55" y="1" width="7" height="9" fill="#6fd27a"/><rect x="58" y="11" width="1" height="48" fill="#000"/><rect x="66" y="1" width="7" height="9" fill="#0e7cf0"/><rect x="69" y="11" width="1" height="48" fill="#000"/><rect x="77" y="1" width="7" height="9" fill="#0e7cf0"/><rect x="80" y="11" width="1" height="48" fill="#000"/><rect x="88" y="1" width="7" height="9" fill="#0e7cf0"/><rect x="91" y="11" width="1" height="48" fill="#000"/><rect x="99" y="1" width="7" height="9" fill="#0e7cf0"/><rect x="102" y="11" width="1" height="48" fill="#000"/><rect x="110" y="1" width="7" height="9" fill="#0e7cf0"/><rect x="113" y="11" width="1" height="48" fill="#000"/><rect x="120" y="1" width="7" height="9" fill="#0e7cf0"/><rect x="123" y="11" width="1" height="48" fill="#000"/><rect x="131" y="1" width="7" height="9" fill="#9cf040"/><rect x="134" y="11" width="1" height="48" fill="#000"/><rect x="216" y="0" width="11" height="11" fill="#000"/><rect x="218" y="1" width="7" height="9" fill="#2a80d8"/><rect x="221" y="11" width="1" height="48" fill="#000"/><rect x="0" y="11" width="9" height="48" fill="#d0c880" opacity=".7"/><rect x="4" y="0" width="1" height="59" fill="#8a8a5a" opacity=".8"/></svg>
<div class="num" style="left:-10.5px">0</div>
<div class="num" style="left:43.8px">5</div>
<div class="num" style="left:98.1px">10</div>
<div class="num" style="left:152.4px">15</div>
<div class="num" style="left:206.7px">20</div>
<div class="num" style="left:261.0px">25</div>
<div class="num" style="left:315.3px">30</div>
<div class="num" style="left:369.6px">35</div>
<div class="num" style="left:423.9px">40</div>
<div class="num" style="left:478.2px">45</div>
<div class="num" style="left:532.5px">50</div>
<div class="num" style="left:586.8px">55</div>
<div class="num" style="left:641.1px">60</div>
<div class="num" style="left:695.4px">65</div>
<div class="num" style="left:749.7px">70</div>
<div class="a" style="left:54px;top:761px;width:85px;height:5px;background:#000"></div>
<div class="a" style="left:53px;top:760px;width:10px;height:7px;background:#fff;border:1px solid #000"></div>
<div class="a" style="left:129px;top:760px;width:10px;height:7px;background:#fff;border:1px solid #000"></div>
<div class="a" style="left:0;top:771px;width:298px;height:23px;background:#dfc1c5;border-top:2px solid #707070;border-left:2px solid #707070;border-right:2px solid #fff;border-bottom:1px solid #fff"></div>
<div class="a" style="left:0;top:794px;width:297px;height:2px;background:#484848"></div>
<div class="a" style="left:298px;top:768px;width:2px;height:28px;background:#37843a"></div>
<div class="a" style="left:303px;top:770px;width:1px;height:26px;background:#0b3a0b"></div>
<div class="a" style="left:305px;top:773px;width:297px;height:21px;border:1px solid;border-color:#0b3a0b #37843a #37843a #0b3a0b"></div>
<div class="t" style="left:313px;top:777px">41 Entities Selected</div>
<svg class="a" style="left:611px;top:776px" width="10" height="13" viewBox="0 0 10 13" shape-rendering="crispEdges">
<rect x="2" y="0" width="5" height="1" fill="#e0e0e0"/><rect x="7" y="1" width="1" height="5" fill="#e8e8e8"/>
<rect x="2" y="1" width="5" height="1" fill="#000"/><rect x="1" y="1" width="1" height="5" fill="#000"/><rect x="6" y="2" width="1" height="4" fill="#000"/>
<rect x="0" y="5" width="8" height="1" fill="#d8d8d8"/><rect x="0" y="6" width="8" height="1" fill="#000"/><rect x="0" y="7" width="8" height="1" fill="#f0f0f0"/><rect x="0" y="8" width="8" height="1" fill="#000"/><rect x="0" y="9" width="8" height="1" fill="#c8c8c8"/><rect x="0" y="10" width="8" height="1" fill="#000"/><rect x="0" y="11" width="8" height="1" fill="#000"/>
<rect x="8" y="5" width="1" height="7" fill="#f4f4f4"/></svg>
<svg class="a" style="left:635px;top:775px" width="15" height="15" viewBox="0 0 15 15" shape-rendering="crispEdges">
<rect x="0.5" y="0.5" width="14" height="14" fill="none" stroke="#000"/><rect x="7" y="1" width="1" height="13" fill="#9aa69a"/><rect x="1" y="7" width="13" height="1" fill="#9aa69a"/><rect x="5" y="5" width="5" height="5" fill="#000"/><rect x="6" y="6" width="3" height="3" fill="#a0a0a0"/></svg>
<div class="t" style="left:658px;top:777px;font-size:13px">X:</div>
<div class="a" style="left:668px;top:773px;width:57px;height:21px;background:#72560a;border:2px solid #0b3a0b;border-right:1px solid #37843a;border-bottom:1px solid #37843a"></div>
<div class="t" style="left:740px;top:777px;font-size:13px">Y:</div>
<div class="a" style="left:750px;top:773px;width:57px;height:21px;background:#72560a;border:2px solid #0b3a0b;border-bottom:1px solid #37843a"></div>
<div class="t" style="left:1014px;top:791px;font-size:12px">Animate</div>
<div class="a" style="left:1055px;top:793px;width:1px;height:3px;background:#000"></div>
<div class="a" style="left:1085px;top:795px;width:53px;height:1px;background:#0a2a0a"></div>
<div class="a" style="left:762px;top:385px;width:395px;height:409px;background:#2a712a;border:1px solid;border-color:#d4d0c8 #404040 #404040 #d4d0c8">
<div class="a" style="left:0;top:0;width:393px;height:407px;border:1px solid;border-color:#fff #808080 #808080 #fff"></div>
<div class="a" style="left:1px;top:1px;width:391px;height:405px;border:1px solid;border-color:#fff #d4d0c8 #d4d0c8 #fff"></div>
<div class="a" style="left:2px;top:2px;width:389px;height:18px;background:#0a246a"></div>
<div class="a" style="left:2px;top:20px;width:389px;height:1px;background:#d4d0c8"></div>
<div class="a" style="left:4px;top:4px;font-weight:bold;font-size:11.5px;color:#fff;line-height:14px;white-space:nowrap">Select Objects</div>
<div class="a" style="left:355px;top:4px;width:16px;height:14px;background:#d4d0c8;border:1px solid;border-color:#fff #404040 #404040 #fff;box-shadow:inset -1px -1px 0 #808080"></div>
<div class="a" style="left:373px;top:4px;width:16px;height:14px;background:#d4d0c8;border:1px solid;border-color:#fff #404040 #404040 #fff;box-shadow:inset -1px -1px 0 #808080"></div>
<div class="a" style="left:355px;top:4px;width:15px;height:14px;color:#000;font-weight:bold;font-size:12px;line-height:14px;text-align:center">?</div>
<svg class="a" style="left:377px;top:7px" width="8" height="7" viewBox="0 0 8 7" shape-rendering="crispEdges"><path d="M0 0h2v1h1v1h2v-1h1v-1h2v1h-1v1h-1v1h-1v1h1v1h1v1h1v1h-2v-1h-1v-1h-2v1h-1v1h-2v-1h1v-1h1v-1h1v-1h-1v-1h-1v-1h-1z" fill="#000"/></svg>
<div class="a" style="left:14px;top:34px;width:204px;height:20px;background:#72560a;border:1px solid;border-color:#0b3a0b #37843a #37843a #0b3a0b;box-shadow:inset 1px 1px 0 #000, inset -1px -1px 0 #2a712a"></div>
<div class="a" style="left:18px;top:37px;width:1px;height:13px;background:#88a8f0"></div>
<div class="a" style="left:13px;top:57px;width:206px;height:251px;background:#0a246a;border:1px solid;border-color:#808080 #fff #fff #808080;overflow:hidden">
<div class="a" style="left:0;top:0;width:204px;height:249px;border:1px solid;border-color:#404040 #d4d0c8 #d4d0c8 #404040"></div>
<div class="li" style="left:3px;top:2px">K<i>_</i>Abdomen</div>
<div class="li" style="left:3px;top:15px">K<i>_</i>Chest</div>
<div class="li" style="left:3px;top:28px">K<i>_</i>Head</div>
<div class="li" style="left:3px;top:41px">K<i>_</i>L Calf</div>
<div class="li" style="left:3px;top:54px">K<i>_</i>L Foot</div>
<div class="li" style="left:3px;top:67px">K<i>_</i>L ForeArm</div>
<div class="li" style="left:3px;top:80px">K<i>_</i>L Hand</div>
<div class="li" style="left:3px;top:93px">K<i>_</i>L Thigh</div>
<div class="li" style="left:3px;top:106px">K<i>_</i>L UpperArm</div>
<div class="li" style="left:3px;top:119px">K<i>_</i>Neck</div>
<div class="li" style="left:3px;top:132px">K<i>_</i>Pelvis</div>
<div class="li" style="left:3px;top:145px">K<i>_</i>R Calf</div>
<div class="li" style="left:3px;top:158px">K<i>_</i>R Foot</div>
<div class="li" style="left:3px;top:171px">K<i>_</i>R ForeArm</div>
<div class="li" style="left:3px;top:184px">K<i>_</i>R Hand</div>
<div class="li" style="left:3px;top:197px">K<i>_</i>R Thigh</div>
<div class="li" style="left:3px;top:210px">K<i>_</i>R UpperArm</div>
<div class="li" style="left:3px;top:223px">WorldBox</div>
<div class="li" style="left:3px;top:236px">WWSkin01</div>
<div class="a" style="left:187px;top:1px;width:16px;height:247px;background:#e9e7e3"></div>
<div class="a" style="left:187px;top:1px;width:16px;height:16px;background:#d4d0c8;border:1px solid;border-color:#d4d0c8 #404040 #404040 #d4d0c8;box-shadow:inset 1px 1px 0 #fff, inset -1px -1px 0 #808080"></div>
<div class="a" style="left:187px;top:132px;width:16px;height:100px;background:#d4d0c8;border:1px solid;border-color:#d4d0c8 #404040 #404040 #d4d0c8;box-shadow:inset 1px 1px 0 #fff, inset -1px -1px 0 #808080"></div>
<div class="a" style="left:187px;top:232px;width:16px;height:16px;background:#d4d0c8;border:1px solid;border-color:#d4d0c8 #404040 #404040 #d4d0c8;box-shadow:inset 1px 1px 0 #fff, inset -1px -1px 0 #808080"></div>
<svg class="a" style="left:191px;top:7px" width="7" height="4" shape-rendering="crispEdges"><path d="M3 0h1v1h1v1h1v1h1v1h-7v-1h1v-1h1v-1h1z" fill="#000"/></svg>
<svg class="a" style="left:191px;top:238px" width="7" height="4" shape-rendering="crispEdges"><path d="M0 0h7v1h-1v1h-1v1h-1v1h-1v-1h-1v-1h-1v-1h-1z" fill="#000"/></svg>
</div>
<div class="grp" style="left:232px;top:34px;width:147px;height:85px"></div>
<div class="gl" style="left:238.70000000000005px;top:28px;width:23px"><span>Sort</span></div>
<div class="grp" style="left:233px;top:128px;width:146px;height:161px"></div>
<div class="gl" style="left:240px;top:122px;width:51px"><span>List Types</span></div>
<div class="grp" style="left:233px;top:318px;width:146px;height:44px"></div>
<div class="gl" style="left:240px;top:312px;width:72px"><span>Selection Sets</span></div>
<svg class="a" style="left:262.20000000000005px;top:45.0px" width="12" height="12" viewBox="0 0 12 12"><circle cx="6" cy="6" r="5.6" fill="#37843a"/><path d="M0 0H12L0 12Z" fill="#0b3a0b" clip-path="circle(5.6px at 6px 6px)"/><circle cx="6" cy="6" r="3.6" fill="#e6a410"/><circle cx="6" cy="6" r="2.2" fill="#f2e07a"/></svg>
<div class="t" style="left:280px;top:44.5px">Alphabetical</div>
<svg class="a" style="left:262.20000000000005px;top:63.0px" width="12" height="12" viewBox="0 0 12 12"><circle cx="6" cy="6" r="5.6" fill="#37843a"/><path d="M0 0H12L0 12Z" fill="#0b3a0b" clip-path="circle(5.6px at 6px 6px)"/><circle cx="6" cy="6" r="3.6" fill="#7a5a0c"/><circle cx="6" cy="6" r="2.2" fill="#7a5a0c"/></svg>
<div class="t" style="left:280px;top:62.5px">By Type</div>
<svg class="a" style="left:262.20000000000005px;top:81.0px" width="12" height="12" viewBox="0 0 12 12"><circle cx="6" cy="6" r="5.6" fill="#37843a"/><path d="M0 0H12L0 12Z" fill="#0b3a0b" clip-path="circle(5.6px at 6px 6px)"/><circle cx="6" cy="6" r="3.6" fill="#7a5a0c"/><circle cx="6" cy="6" r="2.2" fill="#7a5a0c"/></svg>
<div class="t" style="left:280px;top:80.5px">By Color</div>
<svg class="a" style="left:262.20000000000005px;top:98.0px" width="12" height="12" viewBox="0 0 12 12"><circle cx="6" cy="6" r="5.6" fill="#37843a"/><path d="M0 0H12L0 12Z" fill="#0b3a0b" clip-path="circle(5.6px at 6px 6px)"/><circle cx="6" cy="6" r="3.6" fill="#7a5a0c"/><circle cx="6" cy="6" r="2.2" fill="#7a5a0c"/></svg>
<div class="t" style="left:280px;top:97.5px">By Size</div>
<div class="cb" style="left:241px;top:142px"><svg width="9" height="9" viewBox="0 0 9 9" style="position:absolute;left:0;top:0" shape-rendering="crispEdges"><path d="M1 3h1v1h1v1h1v-1h1v-1h1v-1h1v-1h1v3h-1v1h-1v1h-1v1h-1v1h-1v-1h-1v-1h-1z" fill="#ffd62e"/></svg></div>
<div class="t" style="left:259px;top:142px"><u>G</u>eometry</div>
<div class="cb" style="left:241px;top:163px"><svg width="9" height="9" viewBox="0 0 9 9" style="position:absolute;left:0;top:0" shape-rendering="crispEdges"><path d="M1 3h1v1h1v1h1v-1h1v-1h1v-1h1v-1h1v3h-1v1h-1v1h-1v1h-1v1h-1v-1h-1v-1h-1z" fill="#ffd62e"/></svg></div>
<div class="t" style="left:259px;top:163px"><u>S</u>hapes</div>
<div class="cb" style="left:241px;top:185px"><svg width="9" height="9" viewBox="0 0 9 9" style="position:absolute;left:0;top:0" shape-rendering="crispEdges"><path d="M1 3h1v1h1v1h1v-1h1v-1h1v-1h1v-1h1v3h-1v1h-1v1h-1v1h-1v1h-1v-1h-1v-1h-1z" fill="#ffd62e"/></svg></div>
<div class="t" style="left:259px;top:185px"><u>L</u>ights</div>
<div class="cb" style="left:241px;top:206px"><svg width="9" height="9" viewBox="0 0 9 9" style="position:absolute;left:0;top:0" shape-rendering="crispEdges"><path d="M1 3h1v1h1v1h1v-1h1v-1h1v-1h1v-1h1v3h-1v1h-1v1h-1v1h-1v1h-1v-1h-1v-1h-1z" fill="#ffd62e"/></svg></div>
<div class="t" style="left:259px;top:206px"><u>C</u>ameras</div>
<div class="cb" style="left:241px;top:227px"><svg width="9" height="9" viewBox="0 0 9 9" style="position:absolute;left:0;top:0" shape-rendering="crispEdges"><path d="M1 3h1v1h1v1h1v-1h1v-1h1v-1h1v-1h1v3h-1v1h-1v1h-1v1h-1v1h-1v-1h-1v-1h-1z" fill="#ffd62e"/></svg></div>
<div class="t" style="left:259px;top:227px"><u>H</u>elpers</div>
<div class="cb" style="left:241px;top:248px"><svg width="9" height="9" viewBox="0 0 9 9" style="position:absolute;left:0;top:0" shape-rendering="crispEdges"><path d="M1 3h1v1h1v1h1v-1h1v-1h1v-1h1v-1h1v3h-1v1h-1v1h-1v1h-1v1h-1v-1h-1v-1h-1z" fill="#ffd62e"/></svg></div>
<div class="t" style="left:259px;top:248px">Grou<u>p</u>s</div>
<div class="cb" style="left:241px;top:269px"><svg width="9" height="9" viewBox="0 0 9 9" style="position:absolute;left:0;top:0" shape-rendering="crispEdges"><path d="M1 3h1v1h1v1h1v-1h1v-1h1v-1h1v-1h1v3h-1v1h-1v1h-1v1h-1v1h-1v-1h-1v-1h-1z" fill="#ffd62e"/></svg></div>
<div class="t" style="left:259px;top:269px"><u>X</u>Refs</div>
<div class="btn" style="left:311px;top:140px;width:56px;height:18px"></div>
<div class="tc" style="left:310px;top:140.5px;width:56px">All</div>
<div class="btn" style="left:311px;top:162px;width:56px;height:18px"></div>
<div class="tc" style="left:310px;top:162.5px;width:56px">None</div>
<div class="btn" style="left:311px;top:185px;width:56px;height:18px"></div>
<div class="tc" style="left:310px;top:185.5px;width:56px">Invert</div>
<div class="btn" style="left:20px;top:331px;width:57px;height:18px"></div>
<div class="tc" style="left:19px;top:331.5px;width:57px"><u>A</u>ll</div>
<div class="btn" style="left:85px;top:331px;width:57px;height:18px"></div>
<div class="tc" style="left:84px;top:331.5px;width:57px"><u>N</u>one</div>
<div class="btn" style="left:149px;top:331px;width:57px;height:18px"></div>
<div class="tc" style="left:148px;top:331.5px;width:57px"><u>I</u>nvert</div>
<div class="btn" style="left:245px;top:374px;width:62px;height:23px"></div>
<div class="tc" style="left:244px;top:378.0px;width:62px">Select</div>
<div class="btn" style="left:313px;top:374px;width:62px;height:23px"></div>
<div class="tc" style="left:312px;top:378.0px;width:62px">Cancel</div>
<div class="cb" style="left:17px;top:358px"></div>
<div class="t" style="left:35.5px;top:358px">Display Subtree</div>
<div class="cb" style="left:119px;top:358px"></div>
<div class="t" style="left:137.5px;top:358px">Case Sensitive</div>
<div class="cb" style="left:17px;top:378px"></div>
<div class="t" style="left:35.5px;top:378px">Select Subtree</div>
<div class="cb" style="left:119px;top:378px"></div>
<div class="t" style="left:137.5px;top:378px">Select Dependents</div>
<div class="a" style="left:241px;top:330px;width:129px;height:21px;background:#72560a;border:2px solid;border-color:#0b3a0b #37843a #37843a #0b3a0b"></div>
<div class="a" style="left:353px;top:332px;width:15px;height:17px;background:#d4d0c8;border:1px solid;border-color:#fff #404040 #404040 #fff;box-shadow:inset -1px -1px 0 #808080"></div>
<svg class="a" style="left:357px;top:339px" width="7" height="4" shape-rendering="crispEdges"><path d="M0 0h7v1h-1v1h-1v1h-1v1h-1v-1h-1v-1h-1v-1h-1z" fill="#000"/></svg>
</div>
</body></html>
